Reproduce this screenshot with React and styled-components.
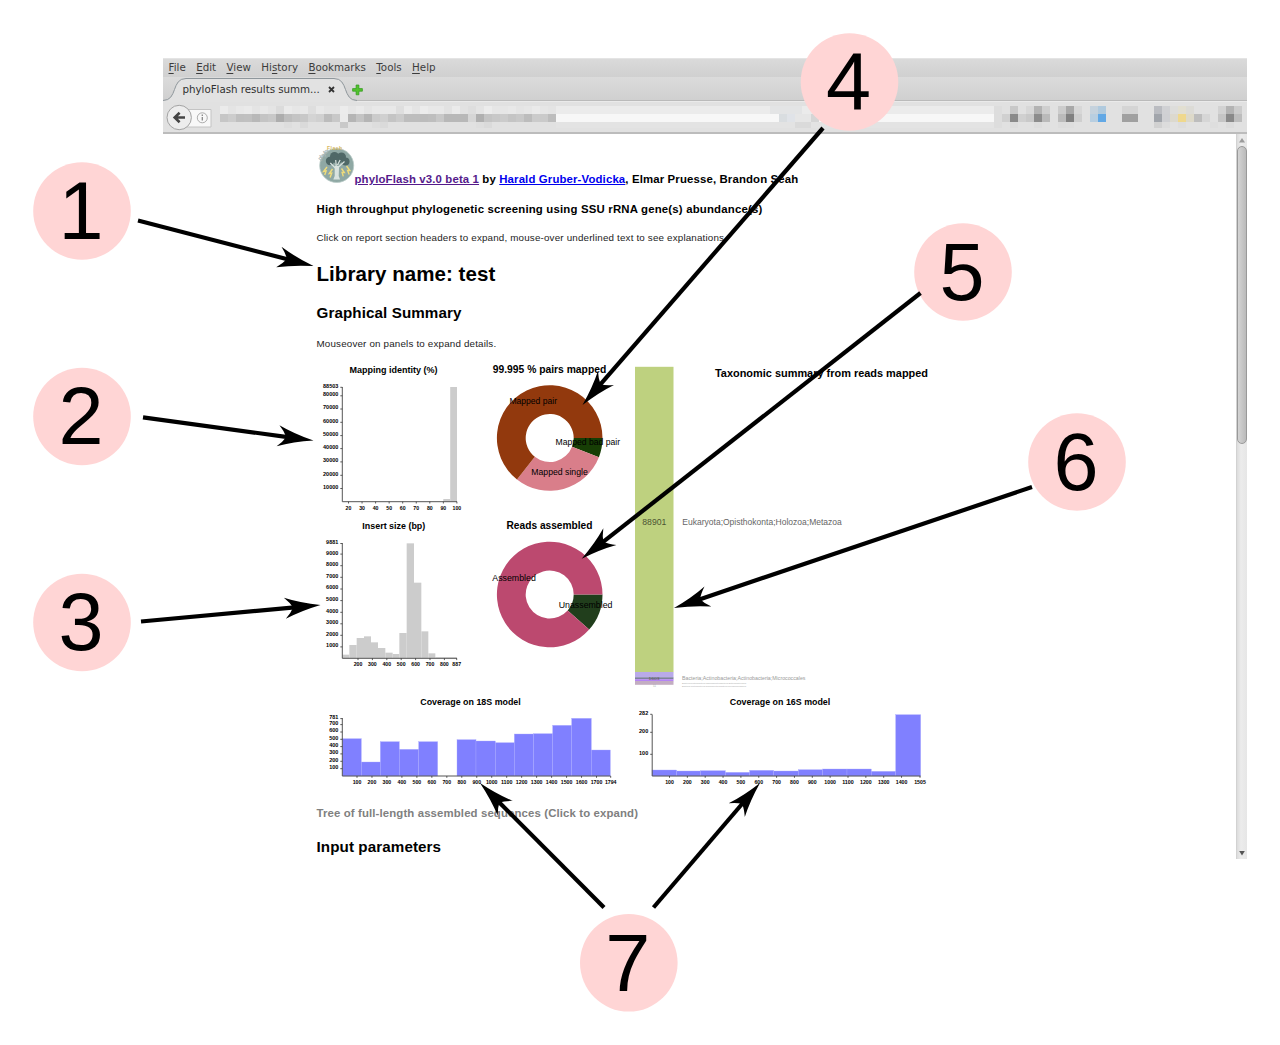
import React from "react";
import styled, { createGlobalStyle } from "styled-components";

const Global = createGlobalStyle`
  * { box-sizing: border-box; }
  body { margin: 0; background: #fff; }
`;
const sans = `"Liberation Sans", Arial, Helvetica, sans-serif`;

const Figure = styled.main`
  position: relative;
  width: 1280px;
  height: 1045px;
  padding: 58px 33px 0 163px;
  background: #fff;
  font-family: ${sans};
  overflow: hidden;
`;
const Window = styled.section`
  height: 801px;
  display: flex;
  flex-direction: column;
`;
const MenuBar = styled.nav`
  height: 19px;
  flex: none;
  display: flex;
  gap: 10.4px;
  padding-left: 5.5px;
  border-top: 1px solid #e4e4e4;
  background: linear-gradient(#dadada, #d0d0d0);
  font: 10.3px/17px "DejaVu Sans", sans-serif;
  color: #3c3c3c;
`;
const Key = styled.span`
  text-decoration: underline;
  text-underline-offset: 1.5px;
  text-decoration-thickness: 1px;
`;
const TabBar = styled.div`
  height: 24px;
  flex: none;
  display: flex;
  background: linear-gradient(#dbdbdb, #d0d0d0);
  border-bottom: 1px solid #bababa;
`;
const Tab = styled.div`
  position: relative;
  width: 189px;
  height: 24px;
  padding-left: 19.5px;
  display: flex;
  gap: 7px;
  font: 10.3px/24px "DejaVu Sans", sans-serif;
  letter-spacing: -0.03px;
  color: #303030;
  white-space: nowrap;
`;
const TabShape = styled.svg`
  position: absolute;
  left: 0;
  top: 0;
`;
const TabLabel = styled.span`
  position: relative;
  flex: none;
  width: 138px;
`;
const TabIcon = styled.svg`
  position: relative;
  flex: none;
  margin-top: ${(p) => p.$top}px;
`;
const ToolBar = styled.div`
  height: 33px;
  flex: none;
  display: flex;
  align-items: flex-start;
  padding: 4px 0 0 3px;
  background: #e1e1e1;
  border-top: 1px solid #eaeaea;
  border-bottom: 2px solid #bcbcbc;
`;
const Mosaic = styled.div`
  width: ${(p) => p.$width}px;
  margin-left: ${(p) => p.$left || 0}px;
  display: flex;
  flex-direction: column;
`;
const MosaicRow = styled.div`
  display: flex;
  height: ${(p) => p.$height || 8}px;
`;
const Cell = styled.i`
  flex: none;
  width: ${(p) => p.$width || 8}px;
  background: ${(p) => p.$color};
`;
const Viewport = styled.div`
  flex: 1;
  min-height: 0;
  display: flex;
`;
const Page = styled.article`
  flex: 1;
  padding: 10px 0 0 153.5px;
  color: #000;
  overflow: hidden;
`;
const ScrollBar = styled.div`
  width: 11px;
  display: flex;
  flex-direction: column;
  align-items: center;
  background: linear-gradient(90deg, #dcdcdc, #ececec 40%, #e6e6e6);
  border-left: 1px solid #d2d2d2;
`;
const ScrollArrow = styled.svg`
  flex: none;
`;
const Thumb = styled.div`
  width: 10px;
  height: 298px;
  border: 1px solid #999;
  border-radius: 5px;
  background: linear-gradient(90deg, #d4d4d4, #bababa);
  margin-bottom: auto;
`;
const Line = styled.div`
  height: ${(p) => p.$height}px;
  line-height: ${(p) => p.$height}px;
  font-size: ${(p) => p.$size}px;
  font-weight: ${(p) => (p.$bold ? 700 : 400)};
  letter-spacing: ${(p) => p.$track || 0}px;
  color: ${(p) => p.$color || "#000"};
  white-space: nowrap;
`;
const Credits = styled.div`
  display: flex;
  height: 46px;
`;
const CreditText = styled(Line)`
  padding-top: 22px;
`;
const Link = styled.a`
  color: ${(p) => (p.$visited ? "#551a8b" : "#0000ee")};
  text-decoration: underline;
  text-underline-offset: 1px;
  text-decoration-thickness: 1px;
`;
const Panels = styled.div`
  display: flex;
  height: 328px;
`;
const Column = styled.div`
  display: flex;
  flex-direction: column;
`;
const CoverageRow = styled.div`
  display: flex;
  height: 100px;
`;
const Plot = styled.svg`
  display: block;
  flex: none;
  overflow: visible;
  font-family: ${sans};
`;
const Overlay = styled.svg`
  position: absolute;
  left: 0;
  top: 0;
  pointer-events: none;
  font-family: ${sans};
`;

function Txt({ x, y, w, size, bold, anchor = "middle", fill = "#000", children }) {
  return (
    <text x={x} y={y} fontSize={size} fontWeight={bold ? 700 : 400} textAnchor={anchor}
      fill={fill} textLength={w} lengthAdjust="spacingAndGlyphs">{children}</text>
  );
}

function Histogram({ box, title, titleX, titleY, titleW, axis, edges, tops, fill, yTicks, xTicks, xw = 2.9, edge }) {
  const [x0, y0, x1, y1] = axis;
  return (
    <Plot width={box[2]} height={box[3]} viewBox={box.join(" ")}>
      <Txt x={titleX} y={titleY} w={titleW} size={9.2} bold>{title}</Txt>
      {tops.map((t, i) => t != null && (
        <rect key={i} x={edges[i]} y={t} width={edges[i + 1] - edges[i]} height={y1 - t} fill={fill} stroke={edge} strokeWidth={edge ? 0.35 : 0} />
      ))}
      <path d={`M${x0} ${y0}V${y1}H${x1}`} fill="none" stroke="#555" strokeWidth="1" />
      {yTicks.map(([label, y]) => (
        <g key={label}>
          <path d={`M${x0 - 2} ${y + 1.3}h2`} stroke="#333" strokeWidth=".8" />
          <Txt x={x0 - 4} y={y + 1.7} w={label.length * 3.05} size={4.8} bold anchor="end">{label}</Txt>
        </g>
      ))}
      {xTicks.map(([label, x]) => (
        <g key={label}>
          <path d={`M${x} ${y1}v1.8`} stroke="#333" strokeWidth=".8" />
          <Txt x={x} y={y1 + 8} w={label.length * xw} size={4.8} bold>{label}</Txt>
        </g>
      ))}
    </Plot>
  );
}

const at = (o, list) => list.map((v) => (v == null ? null : o + v / 3));

function slice(cx, cy, a, b) {
  const R = 52.8, r = 24;
  const p = (rad, d) => `${cx + rad * Math.cos((d * Math.PI) / 180)} ${cy + rad * Math.sin((d * Math.PI) / 180)}`;
  const big = b - a > 180 ? 1 : 0;
  return `M${p(R, a)}A${R} ${R} 0 ${big} 1 ${p(R, b)}L${p(r, b)}A${r} ${r} 0 ${big} 0 ${p(r, a)}Z`;
}

function Donut({ box, title, titleW, titleY, cy, parts, labels }) {
  return (
    <Plot width={box[2]} height={box[3]} viewBox={box.join(" ")}>
      <Txt x={549.5} y={titleY} w={titleW} size={10.4} bold>{title}</Txt>
      {parts.map(([a, b, c]) => <path key={a} d={slice(549.7, cy, a, b)} fill={c} />)}
      {labels.map(([t, x, y, w]) => <Txt key={t} x={x} y={y} w={w} size={9} anchor="start">{t}</Txt>)}
    </Plot>
  );
}

function Logo() {
  return (
    <Plot width="38" height="41" viewBox="316.5 144 38 41">
      <circle cx="336.2" cy="165.5" r="17" fill="#8fa8a4" stroke="#b9cac6" strokeWidth=".8" />
      <g fill="#4f6867">
        <circle cx="329.5" cy="161" r="4.2" /><circle cx="334" cy="156.5" r="4.5" />
        <circle cx="341" cy="157" r="4.5" /><circle cx="345" cy="161.5" r="4" />
        <circle cx="337" cy="160" r="4" />
      </g>
      <path d="M334.8 168l-5-5M335.8 167l-.6-7M338 167l6-5.5M337 165l2.6-5" fill="none" stroke="#d9e3df" strokeWidth="1.2" />
      <path d="M334.2 166h4.4l-.4 10 1.4 3.5h-6.8l1.4-3.5z" fill="#d9e3df" />
      <path d="M326.5 167l-3.4 4.5 2.5-.5-1.4 4M332 169l-3.2 4.5 2.4-.4-1.6 4.4M341 168.5l2.8 4-2.2-.1 1.2 4M346 166l3.4 4.5-2.3-.1 1.6 4" fill="none" stroke="#f0dc7a" strokeWidth="1.4" />
      <text x="326.5" y="149.8" fontSize="5" fontWeight="700" fill="#d7b75c" textLength="15">Flash</text>
      <text transform="translate(320 161) rotate(-50)" fontSize="6" fontWeight="700" fill="#a9b7b7" textLength="13">phylo</text>
    </Plot>
  );
}

const greys = (s) => s.split(" ").map((h) => (h.length === 2 ? `#${h}${h}${h}` : `#${h}`));
const urlTop = greys("eb e4 e8 ea e4 e8 e4 db ea e6 e8 de e8 e4 e4 ec e6 ea e4 e8 e8 e8 de ea e4 ec e8 e8 e2 ea e2 de e4 ec e6 e6 e8 e4 e6 ea e6 e4");
const urlMid = greys("c6 cc bf c0 b8 c4 c8 ad be c4 c8 d4 d0 bc c8 eb b5 c4 b5 cb d0 c4 cb bd bd bc be c8 b8 b8 b8 d6 b0 c4 c8 cb c4 c8 bc cb ca bd");
const urlLow = greys("e1 e1 e1 e1 e1 e1 e1 e1 dd e1 da e1 e1 e1 e1 c9 e1 e1 e1 dd da e1 e1 e1 e1 e1 e1 e1 e1 e1 e1 e1 de da e1 e1 e1 e1 e1 e1 e1 e1");
const tools = [
  greys("dd e1 c8 e1 d8 b3 cf e1 cc a8 d7 e1 c5d2dd b0cade e1 e1 d4 d4 e1 e1 babcc1 d0d1d4 dddddb e2dfd1 dcdbd6 e1 e1 e1 d2 b3 cc"),
  greys("dd d0 8a d0 c9 8c ba e1 bb 81 cf e1 b8cee0 62a8e5 e1 e1 a0 a0 e1 e1 a1a5ab cfd0d3 dcd9ce efd88d ddd9c9 bd d6 e1 c5 89 bd"),
  greys("dd e1 dd e1 e1 dd e1 e1 dd de e1 e1 e1 e1 e1 e1 e1 e1 e1 e1 d1 dc e1 dd e1 e1 e1 de e1 dc e1"),
];

const Cells = ({ list, height, children }) => (
  <MosaicRow $height={height}>{list.map((c, i) => <Cell key={i} $color={c} />)}{children}</MosaicRow>
);

const badges = [[1, 82, 211], [2, 82, 416.5], [3, 82, 622.5], [4, 849.5, 82], [5, 963, 272], [6, 1077, 462], [7, 628.8, 962.8]];
const arrows = [
  [138, 220.5, 313.5, 266], [143, 417.4, 313.5, 440.6], [141, 621.5, 320.5, 605], [823, 128, 582.5, 405],
  [920.5, 293, 581.7, 558.7], [1032, 487, 674, 608], [604, 907.5, 480, 783], [653.5, 907.5, 760, 783],
];

function Arrow({ a: [x1, y1, x2, y2] }) {
  const len = Math.hypot(x2 - x1, y2 - y1);
  const deg = (Math.atan2(y2 - y1, x2 - x1) * 180) / Math.PI;
  return (
    <g transform={`translate(${x2} ${y2}) rotate(${deg})`}>
      <path d={`M${-len} 0H-26`} stroke="#000" strokeWidth="4.2" />
      <path d="M0 0Q-20 -4 -35.8 -10.6Q-30 -5 -27.5 0Q-30 5 -35.8 10.6Q-20 4 0 0Z" />
    </g>
  );
}

const menus = ["|F|ile", "|E|dit", "|V|iew", "Hi|s|tory", "|B|ookmarks", "|T|ools", "|H|elp"];

export default function App() {
  return (
    <Figure>
      <Global />
      <Window>
        <MenuBar>
          {menus.map((m) => {
            const [a, k, b] = m.split("|");
            return <span key={m}>{a}<Key>{k}</Key>{b}</span>;
          })}
        </MenuBar>
        <TabBar>
          <Tab>
            <TabShape width="196" height="25" viewBox="0 0 196 25">
              <path d="M0 23.5C15 23.5 8 1.5 23 1.5H171C186 1.5 179 23.5 194 23.5V25H0Z" fill="#e2e2e2" />
              <path d="M0 23.5C15 23.5 8 1.5 23 1.5H171C186 1.5 179 23.5 194 23.5" fill="none" stroke="#8f979c" />
            </TabShape>
            <TabLabel>phyloFlash results summ...</TabLabel>
            <TabIcon $top={9} width="7" height="7" viewBox="0 0 7 7"><path d="M1 1l5 5M6 1L1 6" stroke="#333" strokeWidth="1.8" /></TabIcon>
          </Tab>
          <TabIcon $top={7} width="12" height="12" viewBox="0 0 12 12">
            <path d="M.6 4.6h3.5V1h2.8v3.6h3.5v2.6H6.9v3.6H4.1V7.2H.6z" fill="#52c22f" stroke="#2f9a1a" strokeWidth=".7" />
          </TabIcon>
        </TabBar>
        <ToolBar>
          <Plot width="46" height="25" viewBox="166 104 46 25">
            <path d="M186 107.5h25v17.5h-25z" fill="#f8f8f8" stroke="#c4c4c4" />
            <circle cx="179.2" cy="115.5" r="12.2" fill="#ededed" stroke="#a3a3a3" />
            <path d="M185 115.5h-9M179.6 110.8l-4.9 4.7 4.9 4.7" fill="none" stroke="#444" strokeWidth="2.6" />
            <circle cx="202.3" cy="115.8" r="5" fill="none" stroke="#999" strokeWidth=".8" />
            <path d="M202.3 115v3.6M202.3 112.6v1.4" stroke="#888" strokeWidth="1.3" />
          </Plot>
          <Mosaic $width={774} $left={8}>
            <Cells list={urlTop}><Cell $width={214} $color="#ebebeb" /><Cell $width={32} $color="#e3e4e5" /><Cell $width={192} $color="#ebebeb" /></Cells>
            <Cells list={urlMid}>
              <Cell $width={223} $color="#f7f7f7" /><Cell $color="#d9dde0" /><Cell $color="#e0e3e8" />
              <Cell $width={16} $color="#e6e6e6" /><Cell $color="#d5d5d5" /><Cell $width={175} $color="#f7f7f7" />
            </Cells>
            <Cells list={urlLow} height={6}><Cell $width={239} $color="#e3e3e3" /><Cell $width={16} $color="#dadada" /><Cell $width={183} $color="#e3e3e3" /></Cells>
          </Mosaic>
          <Mosaic $width={248}>
            <Cells list={tools[0]} /><Cells list={tools[1]} /><Cells list={tools[2]} height={6} />
          </Mosaic>
        </ToolBar>
        <Viewport>
          <Page>
            <Credits>
              <Logo />
              <CreditText $height={27} $size={11.4} $track={0.137} $bold>
                <Link $visited>phyloFlash v3.0 beta 1</Link> by <Link>Harald Gruber-Vodicka</Link>, Elmar Pruesse, Brandon Seah
              </CreditText>
            </Credits>
            <Line $height={38} $size={11.4} $track={0.182} $bold>High throughput phylogenetic screening using SSU rRNA gene(s) abundance(s)</Line>
            <Line $height={20} $size={9.8} $track={0.175} $color="#1c1c1c">Click on report section headers to expand, mouse-over underlined text to see explanations.</Line>
            <Line $height={52} $size={20.5} $track={0.06} $bold>Library name: test</Line>
            <Line $height={26} $size={15.2} $track={0.09} $bold>Graphical Summary</Line>
            <Line $height={36} $size={9.8} $track={0.175} $color="#1c1c1c">Mouseover on panels to expand details.</Line>
            <Panels>
              <Column>
                <Histogram box={[317, 362, 155, 156]} title="Mapping identity (%)" titleX={393.5} titleY={373} titleW={88}
                  axis={[342.3, 387, 457, 501.7]} edges={[443.3, 450.2, 457]} tops={[499, 387]} fill="#ccc"
                  yTicks={[["88503", 386], ["80000", 394.5], ["70000", 407.7], ["60000", 421], ["50000", 434.3], ["40000", 447.3], ["30000", 460.6], ["20000", 474], ["10000", 487.2]]}
                  xTicks={[20, 30, 40, 50, 60, 70, 80, 90, 100].map((v, i) => [String(v), 348.5 + i * 13.55])} />
                <Histogram box={[317, 518, 155, 156]} title="Insert size (bp)" titleX={393.8} titleY={529} titleW={63}
                  axis={[342.3, 543, 457, 658.3]}
                  edges={at(310, [97, 118, 140, 162, 183, 204, 226, 248, 268, 290, 312, 334, 355, 376, 440])}
                  tops={at(515, [419, 390, 369, 364, 382, 399, 413, 417, 354, 85, 203, 349, 415, 427])} fill="#ccc"
                  yTicks={[["9881", 542.2], ["9000", 552.8], ["8000", 564.4], ["7000", 576], ["6000", 587.7], ["5000", 599.3], ["4000", 611], ["3000", 622.5], ["2000", 634], ["1000", 645.6]]}
                  xTicks={[200, 300, 400, 500, 600, 700, 800].map((v, i) => [String(v), 358 + i * 14.4]).concat([["887", 456.7]])} />
              </Column>
              <Column>
                <Donut box={[472, 362, 158, 156]} title="99.995 % pairs mapped" titleW={113.5} titleY={373} cy={438}
                  parts={[[0, 21.3, "#173e05"], [21.3, 128.3, "#d97e8a"], [128.3, 360, "#92390d"]]}
                  labels={[["Mapped pair", 509.5, 404, 47.5], ["Mapped bad pair", 555.5, 445.3, 64.5], ["Mapped single", 531.3, 475, 56.5]]} />
                <Donut box={[472, 518, 158, 156]} title="Reads assembled" titleW={86} titleY={529.3} cy={594.5}
                  parts={[[0, 41.6, "#213e1c"], [41.6, 360, "#bc496f"]]}
                  labels={[["Assembled", 492.3, 581, 43.5], ["Unassembled", 558.7, 608.2, 53.8]]} />
              </Column>
              <Plot width="310" height="326" viewBox="630 362 310 326">
                <rect x="635" y="366.8" width="38.5" height="305.4" fill="#bed17f" />
                <rect x="635" y="672" width="38.5" height="5.5" fill="#b9aae9" />
                <rect x="635" y="677.3" width="38.5" height="2" fill="#7d829d" />
                <rect x="635" y="679.2" width="38.5" height="2" fill="#b583f5" />
                <rect x="635" y="681" width="38.5" height="3.8" fill="#c3adc2" />
                <Txt x={821.5} y={376.8} w={213} size={10.4} bold>Taxonomic summary from reads mapped</Txt>
                <Txt x={654.3} y={525.2} w={24} size={9} fill="#4c5433">88901</Txt>
                <Txt x={682.3} y={525.3} w={159.5} size={8.6} anchor="start" fill="#666">Eukaryota;Opisthokonta;Holozoa;Metazoa</Txt>
                <Txt x={654} y={680} w={11} size={4} fill="#555">1603</Txt>
                <Txt x={654.5} y={686.5} w={3} size={4} fill="#aaa">51</Txt>
                <Txt x={682} y={680.3} w={123.5} size={5} anchor="start" fill="#999">Bacteria;Actinobacteria;Actinobacteria;Micrococcales</Txt>
                <Txt x={682} y={684.3} w={64} size={2.4} anchor="start" fill="#aaa">Bacteria;Proteobacteria;Gammaproteobacteria;Enterobacteriales</Txt>
                <Txt x={682} y={687} w={64} size={2.4} anchor="start" fill="#aaa">Bacteria;Proteobacteria;Gammaproteobacteria;Pseudomonadales</Txt>
              </Plot>
            </Panels>
            <CoverageRow>
              <Histogram box={[317, 690, 310, 100]} title="Coverage on 18S model" titleX={470.5} titleY={704.7} titleW={100.5}
                axis={[342.3, 718, 610.5, 776]} edge="#a9a9ff"
                edges={at(310, [97, 154, 211, 268, 326, 383, 441, 498, 556, 613, 671, 728, 785, 844, 901])}
                tops={at(690, [146, 216, 155, 178, 155, null, 149, 153, 158, 132, 131, 106, 85, 180])} fill="#8080ff"
                yTicks={[["781", 717.3], ["700", 723.3], ["600", 730.7], ["500", 738], ["400", 745.3], ["300", 752.6], ["200", 760], ["100", 767.4]]}
                xTicks={Array.from({ length: 17 }, (_, i) => [String((i + 1) * 100), 357 + i * 14.97]).concat([["1794", 610.7]])} />
              <Histogram box={[627, 690, 310, 100]} title="Coverage on 16S model" titleX={780} titleY={704.7} titleW={100.5}
                axis={[652.2, 714.5, 920.5, 776]} edge="#a9a9ff"
                edges={at(630, [66, 140, 212, 286, 359, 431, 505, 578, 651, 724, 797, 872])}
                tops={at(640, [390, 393, 392, 397, 391, 393, 389, 387, 387, 394, 224])} fill="#8080ff"
                yTicks={[["282", 713], ["200", 731], ["100", 753]]}
                xTicks={Array.from({ length: 14 }, (_, i) => [String((i + 1) * 100), 669.5 + i * 17.85]).concat([["1505", 920]])} />
            </CoverageRow>
            <Line $height={46} $size={11.4} $track={0.123} $bold $color="#808080">Tree of full-length assembled sequences (Click to expand)</Line>
            <Line $height={22} $size={15.2} $track={0.09} $bold>Input parameters</Line>
          </Page>
          <ScrollBar>
            <ScrollArrow width="10" height="12" viewBox="0 0 10 12"><path d="M2 8.5L5 4l3 4.5z" fill="#9b9b9b" /></ScrollArrow>
            <Thumb />
            <ScrollArrow width="10" height="12" viewBox="0 0 10 12"><path d="M2.2 4L5 8.5 7.8 4z" fill="#555" /></ScrollArrow>
          </ScrollBar>
        </Viewport>
      </Window>
      <Overlay width="1280" height="1045" viewBox="0 0 1280 1045">
        {badges.map(([n, x, y]) => (
          <g key={n}>
            <circle cx={x} cy={y} r="48.8" fill="#ffd5d5" />
            <text x={x - 1} y={y + 27.8} fontSize="81" textAnchor="middle">{n}</text>
          </g>
        ))}
        {arrows.map((a, i) => <Arrow key={i} a={a} />)}
      </Overlay>
    </Figure>
  );
}
